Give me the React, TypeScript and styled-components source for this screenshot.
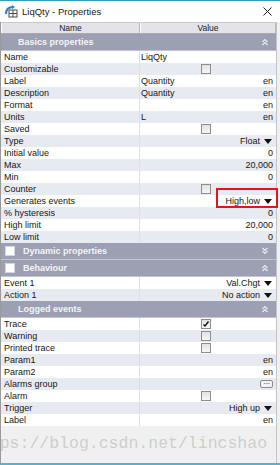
import React from 'react';
import styled, { createGlobalStyle } from 'styled-components';

const GlobalStyle = createGlobalStyle`
  html, body {
    margin: 0;
    padding: 0;
    background: #ffffff;
  }
  body {
    font-family: "Liberation Sans", Arial, sans-serif;
  }
`;

const Window = styled.div`
  position: relative;
  width: 280px;
  height: 465px;
  box-sizing: border-box;
  border-top: 1px solid #2f9fc1;
  border-bottom: 2px solid #55b3cf;
  display: flex;
  flex-direction: column;
  overflow: hidden;
  background: #f0f0f0;
`;

const TitleBar = styled.div`
  height: 21px;
  flex: none;
  display: flex;
  align-items: center;
  gap: 4px;
  padding: 0 8px 0 5px;
  background: #ffffff;
  font-size: 9.5px;
  color: #1a1a1a;
`;

const TitleText = styled.span`
  flex: 1;
`;

const Panel = styled.div`
  width: 277px;
  flex: 1;
  display: flex;
  flex-direction: column;
  box-sizing: border-box;
  border-left: 1px solid #9a9a9a;
  border-right: 1px solid #c4c4c4;
  background: #f0f0f0;
`;

const HeaderRow = styled.div`
  height: 12px;
  flex: none;
  display: grid;
  grid-template-columns: 139px 1fr;
  box-sizing: border-box;
  border-top: 1px solid #c9c9c9;
  border-bottom: 1px solid #a9a9b1;
  background: #e4e4e8;
`;

const HeaderCell = styled.div`
  font-size: 8.5px;
  line-height: 10px;
  text-align: center;
  color: #1a1a1a;
  border-right: 1px solid #b6b6bc;
  border-left: 1px solid #ffffff;
`;

const SectionBar = styled.div<{ $box?: boolean }>`
  height: 17px;
  flex: none;
  display: flex;
  align-items: center;
  gap: 8px;
  box-sizing: border-box;
  padding: 0 7px 0 ${(p) => (p.$box ? '4px' : '17px')};
  background: #9d9fb2;
  border-bottom: 1px solid #c3c4cf;
  color: #f4f4f8;
  font-size: 9px;
  font-weight: bold;
`;

const SectionTitle = styled.span`
  flex: 1;
`;

const SectionBox = styled.span`
  width: 8px;
  height: 8px;
  background: #ffffff;
  border: 1px solid #d6d6de;
`;

const Row = styled.div<{ $alt: boolean }>`
  height: 12px;
  flex: none;
  display: grid;
  grid-template-columns: 139px 1fr;
  background: ${(p) => (p.$alt ? '#e7eaf0' : '#ffffff')};
  font-size: 9px;
  line-height: 12px;
  color: #161616;
`;

const NameCell = styled.div`
  padding-left: 3px;
  border-right: 1px solid #dde0e6;
  white-space: nowrap;
`;

const ValueCell = styled.div<{ $align?: string }>`
  position: relative;
  display: flex;
  align-items: center;
  justify-content: ${(p) => p.$align || 'flex-start'};
  padding: 0 3px 0 1px;
  white-space: nowrap;
`;

const Grow = styled.span`
  flex: 1;
`;

const Check = styled.span`
  position: relative;
  width: 8px;
  height: 8px;
  margin-right: 3px;
  border: 1px solid #8d8d8d;
  background: linear-gradient(#e2e2e2, #f6f6f6);
`;

const Caret = styled.span`
  width: 0;
  height: 0;
  margin-left: 4px;
  margin-right: 1px;
  border-left: 4px solid transparent;
  border-right: 4px solid transparent;
  border-top: 5px solid #111111;
`;

const DotsButton = styled.span`
  width: 13px;
  height: 8px;
  box-sizing: border-box;
  display: flex;
  align-items: center;
  justify-content: center;
  border: 1px solid #8a8a8a;
  border-radius: 2px;
  background: #f3f3f3;
  font-size: 8px;
  line-height: 6px;
  letter-spacing: -0.5px;
  color: #222;
`;

const Marker = styled.div`
  position: absolute;
  left: 76px;
  right: -2px;
  top: -7px;
  bottom: -1px;
  border: 2px solid #e8121a;
  pointer-events: none;
`;

const Footer = styled.div`
  flex: 1;
  background: #f0f0f0;
`;

const Watermark = styled.div`
  position: absolute;
  left: -30px;
  top: 435px;
  font-family: "Liberation Mono", "Courier New", monospace;
  font-size: 16.5px;
  line-height: 1;
  color: rgba(175, 175, 175, 0.55);
  white-space: nowrap;
  pointer-events: none;
`;

type Val =
  | { kind: 'text'; text: string }
  | { kind: 'num'; text: string }
  | { kind: 'check'; checked?: boolean }
  | { kind: 'lang'; text?: string }
  | { kind: 'drop'; text: string; mark?: boolean }
  | { kind: 'btn' };

type Section = {
  title: string;
  box?: boolean;
  open: boolean;
  rows: [string, Val][];
};

const sections: Section[] = [
  {
    title: 'Basics properties',
    open: true,
    rows: [
      ['Name', { kind: 'text', text: 'LiqQty' }],
      ['Customizable', { kind: 'check' }],
      ['Label', { kind: 'lang', text: 'Quantity' }],
      ['Description', { kind: 'lang', text: 'Quantity' }],
      ['Format', { kind: 'lang' }],
      ['Units', { kind: 'lang', text: 'L' }],
      ['Saved', { kind: 'check' }],
      ['Type', { kind: 'drop', text: 'Float' }],
      ['Initial value', { kind: 'num', text: '0' }],
      ['Max', { kind: 'num', text: '20,000' }],
      ['Min', { kind: 'num', text: '0' }],
      ['Counter', { kind: 'check' }],
      ['Generates events', { kind: 'drop', text: 'High,low', mark: true }],
      ['% hysteresis', { kind: 'num', text: '0' }],
      ['High limit', { kind: 'num', text: '20,000' }],
      ['Low limit', { kind: 'num', text: '0' }],
    ],
  },
  { title: 'Dynamic properties', box: true, open: false, rows: [] },
  {
    title: 'Behaviour',
    box: true,
    open: true,
    rows: [
      ['Event 1', { kind: 'drop', text: 'Val.Chgt' }],
      ['Action 1', { kind: 'drop', text: 'No action' }],
    ],
  },
  {
    title: 'Logged events',
    open: true,
    rows: [
      ['Trace', { kind: 'check', checked: true }],
      ['Warning', { kind: 'check' }],
      ['Printed trace', { kind: 'check' }],
      ['Param1', { kind: 'lang' }],
      ['Param2', { kind: 'lang' }],
      ['Alarms group', { kind: 'btn' }],
      ['Alarm', { kind: 'check' }],
      ['Trigger', { kind: 'drop', text: 'High up' }],
      ['Label', { kind: 'lang' }],
    ],
  },
];

const AppIcon = () => (
  <svg width="13" height="13" viewBox="0 0 13 13">
    <rect x="4" y="5" width="8" height="7" fill="#ffffff" stroke="#4a4a4a" strokeWidth="1" />
    <path d="M4 8.5H12M8 5V12" stroke="#4a4a4a" strokeWidth="1" />
    <path d="M1 9C1 4 4 2 8 2" fill="none" stroke="#2f7fc8" strokeWidth="2" />
    <path d="M7 0L10 2L7 4Z" fill="#2f7fc8" />
  </svg>
);

const CloseIcon = () => (
  <svg width="9" height="9" viewBox="0 0 9 9">
    <path d="M0.5 0.5L8.5 8.5M8.5 0.5L0.5 8.5" stroke="#222" strokeWidth="1" />
  </svg>
);

const Chevrons = ({ up }: { up: boolean }) => (
  <svg width="8" height="8" viewBox="0 0 8 8">
    {up ? (
      <path d="M1.5 4L4 1.5L6.5 4M1.5 7L4 4.5L6.5 7" fill="none" stroke="#eceef4" strokeWidth="1.1" />
    ) : (
      <path d="M1.5 1L4 3.5L6.5 1M1.5 4L4 6.5L6.5 4" fill="none" stroke="#eceef4" strokeWidth="1.1" />
    )}
  </svg>
);

const TickMark = () => (
  <svg width="8" height="8" viewBox="0 0 8 8" style={{ position: 'absolute', left: 0, top: 0 }}>
    <path d="M1.5 4.5L3 6L6.5 1.5" fill="none" stroke="#111" strokeWidth="1.4" />
  </svg>
);

const renderValue = (v: Val) => {
  switch (v.kind) {
    case 'text':
      return <ValueCell>{v.text}</ValueCell>;
    case 'num':
      return <ValueCell $align="flex-end">{v.text}</ValueCell>;
    case 'check':
      return (
        <ValueCell $align="center">
          <Check>{v.checked && <TickMark />}</Check>
        </ValueCell>
      );
    case 'lang':
      return (
        <ValueCell>
          <Grow>{v.text}</Grow>
          <span>en</span>
        </ValueCell>
      );
    case 'drop':
      return (
        <ValueCell $align="flex-end">
          {v.text}
          <Caret />
          {v.mark && <Marker />}
        </ValueCell>
      );
    case 'btn':
      return (
        <ValueCell $align="flex-end">
          <DotsButton>···</DotsButton>
        </ValueCell>
      );
  }
};

const App = () => {
  return (
    <>
      <GlobalStyle />
      <Window>
        <TitleBar>
          <AppIcon />
          <TitleText>LiqQty - Properties</TitleText>
          <CloseIcon />
        </TitleBar>
        <Panel>
          <HeaderRow>
            <HeaderCell>Name</HeaderCell>
            <HeaderCell>Value</HeaderCell>
          </HeaderRow>
          {sections.map((s) => (
            <React.Fragment key={s.title}>
              <SectionBar $box={s.box}>
                {s.box && <SectionBox />}
                <SectionTitle>{s.title}</SectionTitle>
                <Chevrons up={s.open} />
              </SectionBar>
              {s.rows.map(([name, val], i) => (
                <Row key={name + i} $alt={i % 2 === 1}>
                  <NameCell>{name}</NameCell>
                  {renderValue(val)}
                </Row>
              ))}
            </React.Fragment>
          ))}
          <Footer />
        </Panel>
        <Watermark>https://blog.csdn.net/lincshao</Watermark>
      </Window>
    </>
  );
};

export default App;
